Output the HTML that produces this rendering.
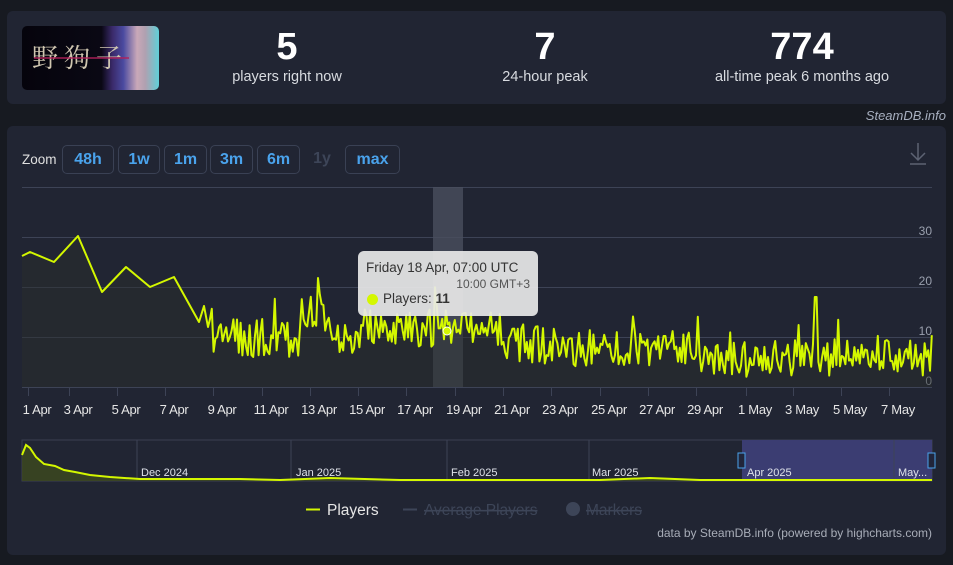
<!DOCTYPE html>
<html><head><meta charset="utf-8"><style>
*{margin:0;padding:0;box-sizing:border-box}
body{width:953px;height:565px;background:#171a21;font-family:"Liberation Sans",sans-serif;position:relative;overflow:hidden;color:#fff}
.p{position:absolute;left:7px;width:939px;background:#212533;border-radius:6px}
.stat{position:absolute;top:26px;text-align:center}
.stat b{display:block;font-size:38px;line-height:42px;font-weight:700}
.stat span{font-size:14.5px;color:#d8dbe0}
.btn{position:absolute;top:145px;height:29px;border:1px solid #3a4154;border-radius:5px;color:#4aa3ec;font-weight:700;font-size:16px;line-height:27px;text-align:center}
.xl{position:absolute;top:402px;font-size:13px;color:#e6e6e6;transform:translateX(-50%);white-space:nowrap;letter-spacing:-0.3px}
</style></head><body>
<div class="p" style="top:11px;height:93px"></div>
<div style="position:absolute;left:22px;top:26px;width:137px;height:64px;border-radius:5px;background:linear-gradient(90deg,#05040c 0%,#0a0814 58%,#3a2a6a 66%,#4a4aa0 74%,#c9a8b8 84%,#b0a0b0 90%,#60d0d8 100%);overflow:hidden">
<div style="position:absolute;left:10px;top:12px;font-family:'Noto Serif CJK SC',serif;font-size:26px;color:#cfc6b0;letter-spacing:6px">野狗子</div>
<div style="position:absolute;left:12px;top:31px;width:95px;height:2px;background:#b0205a;opacity:.7"></div></div>
<div class="stat" style="left:187px;width:200px"><b>5</b><span>players right now</span></div>
<div class="stat" style="left:445px;width:200px"><b>7</b><span>24-hour peak</span></div>
<div class="stat" style="left:692px;width:220px"><b>774</b><span>all-time peak 6 months ago</span></div>
<div style="position:absolute;right:7px;top:108px;font-size:13px;font-style:italic;color:#a8b0c0">SteamDB.info</div>
<div class="p" style="top:126px;height:429px"></div>
<div style="position:absolute;left:22px;top:152px;font-size:13.5px;color:#e0e0e0">Zoom</div>
<div class="btn" style="left:62px;width:52px">48h</div>
<div class="btn" style="left:118px;width:42px">1w</div>
<div class="btn" style="left:164px;width:43px">1m</div>
<div class="btn" style="left:210px;width:43px">3m</div>
<div class="btn" style="left:257px;width:43px">6m</div>
<div class="btn" style="left:306px;width:32px;border:none;color:#3d4558">1y</div>
<div class="btn" style="left:345px;width:55px">max</div>
<svg style="position:absolute;left:0;top:0" width="953" height="565" id="s">
<path d="M918 143v17M911 153l7 7 7-7M910 164h16" stroke="#5d6373" stroke-width="1.5" fill="none"/>
<g stroke="#3d4356" stroke-width="1"><line x1="22" y1="187.5" x2="932" y2="187.5"/><line x1="22" y1="237.5" x2="932" y2="237.5"/><line x1="22" y1="287.5" x2="932" y2="287.5"/><line x1="22" y1="337.5" x2="932" y2="337.5"/><line x1="22" y1="387.5" x2="932" y2="387.5"/></g>
<g stroke="#3d4356" id="ticks"></g>
<g fill="#9aa0ae" font-size="12" text-anchor="end"><text x="932" y="235">30</text><text x="932" y="285">20</text><text x="932" y="335">10</text><text x="932" y="385">0</text></g>
<rect x="433" y="187" width="30" height="200" fill="#4a4f5e" opacity=".8"/>
<path id="area" fill="#2a2f2a" opacity=".45"/>
<path id="ln" fill="none" stroke="#d4f700" stroke-width="2" stroke-linejoin="round"/>
<circle cx="447" cy="331" r="4" fill="#d4f700" stroke="#fff" stroke-width="1"/>
<rect x="22" y="440" width="910" height="41" fill="none" stroke="#3a3f52"/>
<rect x="742" y="440" width="190" height="41" fill="#3b3d72"/>
<g stroke="#3d4356"><line x1="137" y1="440" x2="137" y2="481"/><line x1="291" y1="440" x2="291" y2="481"/><line x1="447" y1="440" x2="447" y2="481"/><line x1="589" y1="440" x2="589" y2="481"/><line x1="894" y1="440" x2="894" y2="481"/></g>
<path d="M22 481V455L26 445L30 448L36 457L44 464L55 466L64 470L75 472L90 475L110 477L140 479L200 479L240 479L280 480L330 479L400 480L600 480L650 478L700 480L932 480V481Z" fill="#3d4a1e" opacity=".8"/>
<path d="M22 455L26 445L30 448L36 457L44 464L55 466L64 470L75 472L90 475L110 477L140 479L200 479L240 479L280 480L330 478L400 480L600 480L650 478L700 480L932 480" fill="none" stroke="#d4f700" stroke-width="2"/>
<g font-size="11" fill="#dfe2ea"><text x="141" y="476">Dec 2024</text><text x="296" y="476">Jan 2025</text><text x="451" y="476">Feb 2025</text><text x="592" y="476">Mar 2025</text><text x="747" y="476">Apr 2025</text><text x="898" y="476">May...</text></g>
<rect x="738" y="453" width="7" height="15" fill="#21253a" stroke="#4aa3ec"/><rect x="928" y="453" width="7" height="15" fill="#21253a" stroke="#4aa3ec"/>
<line x1="306" y1="509.5" x2="320" y2="509.5" stroke="#d4f700" stroke-width="2"/>
<text x="327" y="515" font-size="15.5" fill="#e6e6e6">Players</text>
<line x1="403" y1="509.5" x2="417" y2="509.5" stroke="#3d4558" stroke-width="2"/>
<text x="424" y="515" font-size="15.5" fill="#3d4558" text-decoration="line-through">Average Players</text>
<circle cx="573" cy="509" r="7" fill="#3d4558"/>
<text x="586" y="515" font-size="15.5" fill="#3d4558" text-decoration="line-through">Markers</text>
<text x="932" y="537" font-size="12" fill="#a8adb8" text-anchor="end">data by SteamDB.info (powered by highcharts.com)</text>
</svg>
<div style="position:absolute;left:358px;top:251px;width:180px;height:65px;background:rgba(232,232,232,.92);border-radius:6px;color:#333">
<div style="position:absolute;left:8px;top:9px;font-size:13.5px">Friday 18 Apr, 07:00 UTC</div>
<div style="position:absolute;right:8px;top:26px;font-size:12px;color:#555">10:00 GMT+3</div>
<div style="position:absolute;left:9px;top:43px;width:11px;height:11px;border-radius:50%;background:#d4f700"></div>
<div style="position:absolute;left:25px;top:40px;font-size:13.5px">Players: <b>11</b></div></div>
<div id="xls"></div>
<script>
var X=[[37,"1 Apr"],[78,"3 Apr"],[126,"5 Apr"],[174,"7 Apr"],[222,"9 Apr"],[271,"11 Apr"],[319,"13 Apr"],[367,"15 Apr"],[415,"17 Apr"],[464,"19 Apr"],[512,"21 Apr"],[560,"23 Apr"],[609,"25 Apr"],[657,"27 Apr"],[705,"29 Apr"],[755,"1 May"],[802,"3 May"],[850,"5 May"],[898,"7 May"]];
var h="",t="";X.forEach(function(a){h+='<div class="xl" style="left:'+a[0]+'px">'+a[1]+'</div>';t+='<line x1="'+(a[0]-8.5)+'" y1="388" x2="'+(a[0]-8.5)+'" y2="396"/>';});
document.getElementById("xls").innerHTML=h;document.getElementById("ticks").innerHTML=t;
var s=11;function r(){s=(s*16807)%2147483647;return s/2147483647;}
var pts=[[22,256],[30,252],[54,262],[78,236],[102,292],[126,267],[150,287],[174,277],[199,322],[204,306],[208,327]];
function base(x){if(x<300)return 338;if(x<330)return 312;if(x<360)return 340;if(x<500)return 328;if(x<560)return 345;if(x<700)return 348;return 358;}
for(var x=210;x<=932;x+=1.8){var b=base(x);var v=b+(r()-0.5)*38;if(r()<0.07)v-=22;if(Math.abs(x-816)<2)v=297;v=Math.max(278,Math.min(382,v));pts.push([x,v]);}
var d="M"+pts.map(function(p){return p[0].toFixed(1)+" "+p[1].toFixed(1)}).join("L");
document.getElementById("ln").setAttribute("d",d);
document.getElementById("area").setAttribute("d",d+"L932 387L22 387Z");
</script>
</body></html>
